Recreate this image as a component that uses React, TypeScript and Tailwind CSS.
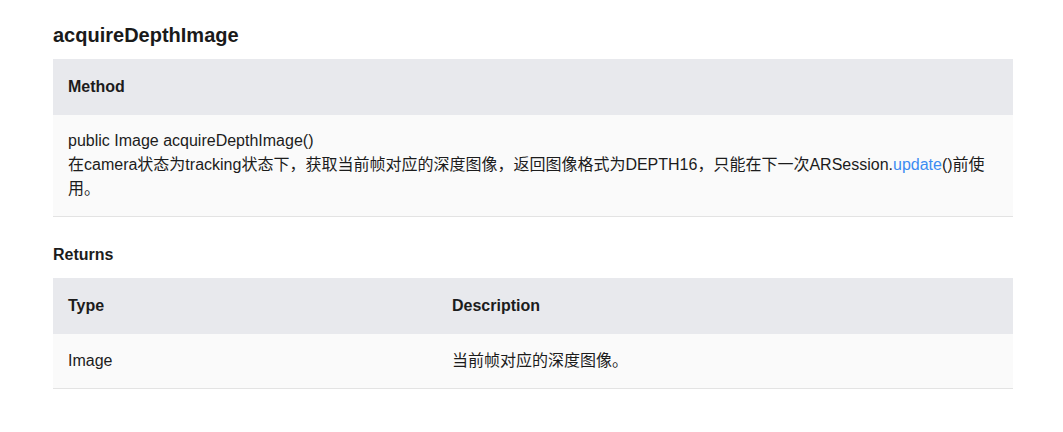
import React from 'react';

const font = { fontFamily: '"Liberation Sans", Arial, "Noto Sans CJK SC", sans-serif' };

export default function App() {
  return (
    <div className="min-h-screen bg-white text-[#1c1c1c]" style={font}>
      <div className="ml-[53px] w-[960px] pt-[21px]">
        <h2 className="text-[20px] leading-[28px] font-bold text-[#1a1a1a]">acquireDepthImage</h2>

        {/* Method table */}
        <table className="mt-[10px] w-full border-collapse text-[16px] leading-[24px]">
          <thead>
            <tr className="bg-[#e8e9ed]">
              <th className="h-[56px] px-[15px] text-left font-bold">Method</th>
            </tr>
          </thead>
          <tbody>
            <tr className="bg-[#fafafa] border-b border-[#e3e3e3]">
              <td className="px-[15px] pt-[14px] pb-[15px]">
                public Image acquireDepthImage()
                <br />
                在camera状态为tracking状态下，获取当前帧对应的深度图像，返回图像格式为DEPTH16，只能在下一次ARSession.<a className="text-[#3c8cf2]">update</a>()前使用。
              </td>
            </tr>
          </tbody>
        </table>

        <h3 className="mt-[26px] text-[16px] leading-[24px] font-bold">Returns</h3>

        {/* Returns table */}
        <table className="mt-[11px] w-full border-collapse text-[16px] leading-[24px]">
          <thead>
            <tr className="bg-[#e8e9ed]">
              <th className="h-[56px] w-[40%] px-[15px] text-left font-bold">Type</th>
              <th className="h-[56px] px-[15px] text-left font-bold">Description</th>
            </tr>
          </thead>
          <tbody>
            <tr className="bg-[#fafafa] border-b border-[#e3e3e3]">
              <td className="h-[54px] px-[15px]">Image</td>
              <td className="h-[54px] px-[15px]">当前帧对应的深度图像。</td>
            </tr>
          </tbody>
        </table>
      </div>
    </div>
  );
}
